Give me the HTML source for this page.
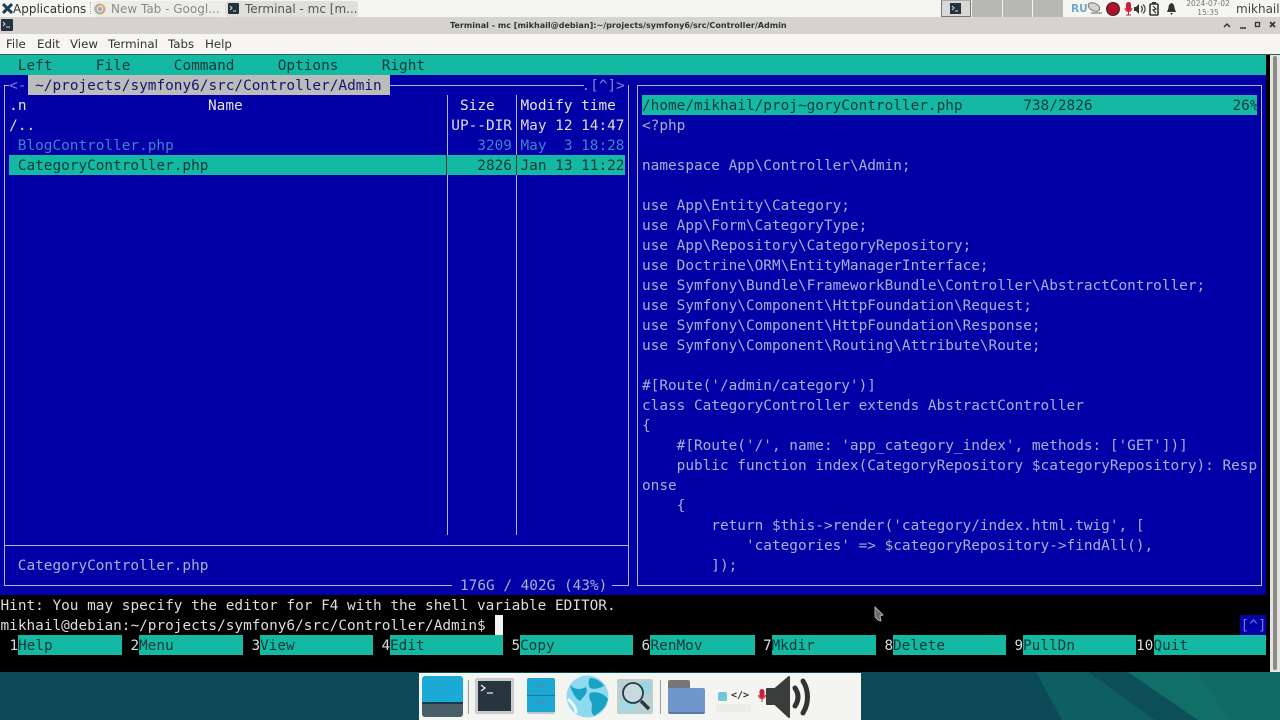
<!DOCTYPE html>
<html><head><meta charset="utf-8"><style>
html,body{margin:0;padding:0;width:1280px;height:720px;overflow:hidden;background:#0b4a58}
*{box-sizing:border-box}
.a{position:absolute}
#root{position:absolute;left:0;top:0;width:1280px;height:720px;overflow:hidden;font-family:"DejaVu Sans","Liberation Sans",sans-serif;filter:blur(.35px)}
pre{position:absolute;margin:1px 0 0 0;font:14.4px/20px "DejaVu Sans Mono","Liberation Mono",monospace;color:#c4c6dc;white-space:pre}
.w{color:#dcdcdc}.h{color:#e4e4d8}.d{color:#3f80cf}.k{color:#0f3a3a}.m{color:#0f4a48}
.l{position:absolute;background:#b4b4e0}
.t{position:absolute;background:#14b9a4}
.tb{position:absolute;font-size:12px;color:#4a4a4a;line-height:17px;white-space:pre;margin-top:0.500px}
.mn{position:absolute;font-size:11.800px;color:#333;line-height:20px;top:34px}
</style></head><body><div id="root">
<!-- top panel -->
<div class="a" style="left:0;top:0;width:1280px;height:17px;background:#f5f5f1"></div>
<svg class="a" style="left:2px;top:3px" width="11" height="11" viewBox="0 0 11 11"><path d="M1 1l9 9M10 1L1 10" stroke="#1c3f55" stroke-width="3"/></svg>
<div class="tb" style="left:13px;top:0;color:#333">Applications</div>
<div class="a" style="left:90px;top:2px;width:2px;height:12px;border-left:1px dotted #aaa"></div>
<div class="a" style="left:93px;top:1px;width:132px;height:16px;background:#ecece8;border-radius:3px"></div>
<svg class="a" style="left:94px;top:3px" width="12" height="12" viewBox="0 0 12 12"><circle cx="6" cy="6" r="5.500" fill="#d8a080"/><path d="M6 .5A5.500 5.500 0 0 1 11 4H6z" fill="#d9c070"/><path d="M1 3a5.500 5.500 0 0 0 4 8.400L7 8z" fill="#9cbf94"/><circle cx="6" cy="6" r="2.600" fill="#8fa9c8" stroke="#eee"/></svg>
<div class="tb" style="left:111px;top:0;color:#8a8a8a">New Tab - Googl...</div>
<div class="a" style="left:225px;top:1px;width:133px;height:16px;background:#dfdfdb;border-radius:3px"></div>
<div class="a" style="left:228px;top:3px;width:11px;height:11px;background:#24323e;border-radius:1px"></div>
<svg class="a" style="left:229px;top:4px" width="9" height="9" viewBox="0 0 9 9"><path d="M1 2l2 2-2 2M4 7h3" stroke="#ddd" fill="none"/></svg>
<div class="tb" style="left:245px;top:0;color:#555">Terminal - mc [m...</div>
<div class="a" style="left:941px;top:0;width:30px;height:17px;background:#d8d8d6;border:1px solid #777;border-top:1px solid #aaa"></div>
<div class="a" style="left:950px;top:3px;width:11px;height:11px;background:#24323e"></div>
<svg class="a" style="left:951px;top:4px" width="9" height="9" viewBox="0 0 9 9"><path d="M1 2l2 2-2 2M4 7h3" stroke="#ddd" fill="none"/></svg>
<div class="a" style="left:972px;top:0;width:29.500px;height:17px;background:#b7b7b3"></div>
<div class="a" style="left:1002.500px;top:0;width:29.500px;height:17px;background:#b7b7b3"></div>
<div class="a" style="left:1033px;top:0;width:30px;height:17px;background:#b7b7b3"></div>
<div class="tb" style="left:1071px;top:0;font-size:10.500px;color:#6fa8c8;font-weight:bold">RU</div>
<svg class="a" style="left:1087px;top:1px" width="16" height="15" viewBox="0 0 16 15"><ellipse cx="7" cy="6" rx="6" ry="3.800" transform="rotate(25 7 6)" fill="#d4d4d2" stroke="#777" stroke-width="1"/><path d="M4 12h11" stroke="#aaa" stroke-width="2"/></svg>
<div class="a" style="left:1106px;top:2px;width:14px;height:14px;border-radius:50%;background:#b0102a;border:1px solid #3a2a2a"></div>
<svg class="a" style="left:1124px;top:2px" width="9" height="14" viewBox="0 0 9 14"><rect x="2" y="0" width="5" height="9" rx="2.500" fill="#c8203a"/><path d="M1 6a3.500 3.500 0 0 0 7 0M4.500 10v3M2 13h5" stroke="#c8203a" fill="none"/></svg>
<svg class="a" style="left:1134px;top:3px" width="12" height="12" viewBox="0 0 12 12"><path d="M0 4h2l3-3v10L2 8H0z" fill="#333"/><path d="M7 3a4 4 0 0 1 0 6M9 1.500a6 6 0 0 1 0 9" stroke="#444" fill="none" stroke-width="1.200"/></svg>
<svg class="a" style="left:1149px;top:2px" width="11" height="14" viewBox="0 0 11 14"><rect x="1" y="2" width="8" height="11" rx="1" fill="none" stroke="#333" stroke-width="1.600"/><rect x="3" y="0" width="4" height="2" fill="#333"/><path d="M4 4l3 3-3 1 3 3" stroke="#333" fill="none" stroke-width="1.200"/></svg>
<svg class="a" style="left:1166px;top:3px" width="11" height="12" viewBox="0 0 11 12"><path d="M5.500 0C3 1 2.500 3 2.500 5L1 9h9L8.500 5C8.500 3 8 1 5.500 0zM4 10h3l-1.500 2z" fill="#333"/></svg>
<div class="a" style="left:1183px;top:0;width:50px;text-align:center;font-size:7.500px;line-height:8.500px;color:#777;white-space:pre">2024-07-02
15:35</div>
<div class="tb" style="left:1236px;top:0;color:#444">mikhail</div>
<!-- title bar -->
<div class="a" style="left:0;top:17px;width:1280px;height:17px;background:#d4d3cf"></div>
<div class="a" style="left:1px;top:19px;width:12px;height:12px;background:#24323e;border-radius:1px"></div>
<svg class="a" style="left:2px;top:20px" width="10" height="10" viewBox="0 0 10 10"><path d="M1 2l2 2-2 2M4 7h4" stroke="#ddd" fill="none"/></svg>
<div class="a" style="left:450px;top:17.500px;font-size:8.050px;line-height:16px;font-weight:bold;color:#333;white-space:pre">Terminal - mc [mikhail@debian]:~/projects/symfony6/src/Controller/Admin</div>
<svg class="a" style="left:1222px;top:20px" width="56" height="11" viewBox="0 0 56 11"><path d="M2 7l3-3 3 3" stroke="#333" fill="none" stroke-width="1.500"/><path d="M18 8h6" stroke="#333" stroke-width="1.500"/><rect x="33.500" y="2.500" width="4" height="4" stroke="#333" fill="none" stroke-width="1.300"/><path d="M48 2l5 5M53 2l-5 5" stroke="#333" stroke-width="1.600"/></svg>
<!-- menubar -->
<div class="a" style="left:0;top:34px;width:1280px;height:20px;background:#f6f5f2"></div>
<div class="mn" style="left:6px">File</div><div class="mn" style="left:37px">Edit</div><div class="mn" style="left:70px">View</div><div class="mn" style="left:108px">Terminal</div><div class="mn" style="left:168px">Tabs</div><div class="mn" style="left:205px">Help</div>
<div class="a" style="left:0;top:54px;width:1280px;height:1px;background:#2f5d5c"></div>
<!-- scrollbar -->
<div class="a" style="left:1270px;top:55px;width:10px;height:617px;background:#e4e3df"></div>
<div class="a" style="left:1273px;top:56px;width:4px;height:614px;background:#8a8a88;border-radius:2px"></div>
<!-- terminal -->
<div class="a" style="left:0;top:55px;width:1270px;height:617px;background:#000"></div>
<div class="t" style="left:0;top:55px;width:1266px;height:20px"></div>
<div class="a" style="left:0;top:75px;width:1266px;height:520px;background:#0000a6"></div>
<pre class="k" style="left:0.500px;top:55px">  Left     File     Command     Options     Right</pre>
<!-- left panel borders -->
<div class="l" style="left:4px;top:85px;width:1px;height:500px"></div>
<div class="l" style="left:628px;top:85px;width:1px;height:500px"></div>
<div class="l" style="left:4px;top:85px;width:24px;height:1px"></div>
<div class="l" style="left:390px;top:85px;width:194px;height:1px"></div>
<div class="l" style="left:4px;top:545px;width:625px;height:1px"></div>
<div class="l" style="left:4px;top:585px;width:448px;height:1px"></div>
<div class="l" style="left:612px;top:585px;width:17px;height:1px"></div>
<div class="l" style="left:447px;top:95px;width:1px;height:440px"></div>
<div class="l" style="left:516px;top:95px;width:1px;height:440px"></div>
<!-- header path -->
<div class="a" style="left:28px;top:75px;width:362px;height:20px;background:#bcbcbc"></div>
<div class="a" style="left:9px;top:80px;width:19px;height:10px;background:#0000a6"></div>
<pre style="left:9px;top:75px;color:#7f86d0">&lt;-</pre>
<pre style="left:26.500px;top:75px;color:#16166a"> ~/projects/symfony6/src/Controller/Admin </pre>
<div class="a" style="left:584px;top:80px;width:40px;height:10px;background:#0000a6"></div>
<pre style="left:581.500px;top:75px;color:#7f86d0">.[^]&gt;</pre>
<pre class="h" style="left:9.170px;top:95px">.n</pre>
<pre class="h" style="left:208px;top:95px">Name</pre>
<pre class="h" style="left:460px;top:95px">Size</pre>
<pre class="h" style="left:520.500px;top:95px">Modify time</pre>
<pre class="w" style="left:9.170px;top:115px">/..</pre>
<pre class="w" style="left:451.300px;top:115px">UP--DIR</pre>
<pre class="w" style="left:520.500px;top:115px">May 12 14:47</pre>
<pre class="d" style="left:17.800px;top:135px">BlogController.php</pre>
<pre class="d" style="left:477.300px;top:135px">3209</pre>
<pre class="d" style="left:520.500px;top:135px">May  3 18:28</pre>
<div class="t" style="left:9px;top:155px;width:616px;height:20px"></div>
<div class="a" style="left:446px;top:155px;width:1px;height:20px;background:#123c3c"></div>
<div class="a" style="left:516px;top:155px;width:1px;height:20px;background:#123c3c"></div>
<pre class="k" style="left:17.800px;top:155px">CategoryController.php</pre>
<pre class="k" style="left:477.300px;top:155px">2826</pre>
<pre class="k" style="left:520.500px;top:155px">Jan 13 11:22</pre>
<pre style="left:17.800px;top:555px;color:#a9aed8">CategoryController.php</pre>
<pre style="left:460px;top:575px;color:#a9aed8">176G / 402G (43%)</pre>
<!-- right panel -->
<div class="a" style="left:637px;top:85px;width:625px;height:501px;border:1px solid #b4b4e0"></div>
<div class="t" style="left:642px;top:95px;width:615px;height:20px"></div>
<pre class="k" style="left:642px;top:95px">/home/mikhail/proj~goryController.php       738/2826</pre>
<pre class="k" style="left:1232.500px;top:95px">26%</pre>
<pre style="left:642px;top:115px;color:#a9aed8">&lt;?php

namespace App\Controller\Admin;

use App\Entity\Category;
use App\Form\CategoryType;
use App\Repository\CategoryRepository;
use Doctrine\ORM\EntityManagerInterface;
use Symfony\Bundle\FrameworkBundle\Controller\AbstractController;
use Symfony\Component\HttpFoundation\Request;
use Symfony\Component\HttpFoundation\Response;
use Symfony\Component\Routing\Attribute\Route;

#[Route('/admin/category')]
class CategoryController extends AbstractController
{
    #[Route('/', name: 'app_category_index', methods: ['GET'])]
    public function index(CategoryRepository $categoryRepository): Resp
onse
    {
        return $this-&gt;render('category/index.html.twig', [
            'categories' =&gt; $categoryRepository-&gt;findAll(),
        ]);</pre>
<!-- shell -->
<pre class="w" style="left:0.500px;top:595px">Hint: You may specify the editor for F4 with the shell variable EDITOR.</pre>
<pre class="w" style="left:0.500px;top:615px">mikhail@debian:~/projects/symfony6/src/Controller/Admin$</pre>
<div class="a" style="left:495px;top:615px;width:8px;height:20px;background:#f4f4f4"></div>
<div class="a" style="left:1240px;top:615px;width:26px;height:20px;background:#0000a6"></div>
<pre style="left:1240.500px;top:615px;color:#6f78d8">[^]</pre>
<!-- keybar -->
<div class="t" style="left:18px;top:635px;width:104px;height:20px"></div>
<div class="t" style="left:139px;top:635px;width:104px;height:20px"></div>
<div class="t" style="left:260px;top:635px;width:113px;height:20px"></div>
<div class="t" style="left:390px;top:635px;width:113px;height:20px"></div>
<div class="t" style="left:520px;top:635px;width:113px;height:20px"></div>
<div class="t" style="left:650px;top:635px;width:105px;height:20px"></div>
<div class="t" style="left:772px;top:635px;width:104px;height:20px"></div>
<div class="t" style="left:893px;top:635px;width:113px;height:20px"></div>
<div class="t" style="left:1023px;top:635px;width:113px;height:20px"></div>
<div class="t" style="left:1154px;top:635px;width:112px;height:20px"></div>
<pre class="w" style="left:9.500px;top:635px">1</pre><pre class="k" style="left:18px;top:635px">Help</pre>
<pre class="w" style="left:130.500px;top:635px">2</pre><pre class="k" style="left:139px;top:635px">Menu</pre>
<pre class="w" style="left:251.500px;top:635px">3</pre><pre class="k" style="left:260px;top:635px">View</pre>
<pre class="w" style="left:381.500px;top:635px">4</pre><pre class="k" style="left:390px;top:635px">Edit</pre>
<pre class="w" style="left:511.500px;top:635px">5</pre><pre class="k" style="left:520px;top:635px">Copy</pre>
<pre class="w" style="left:641.500px;top:635px">6</pre><pre class="k" style="left:650.500px;top:635px">RenMov</pre>
<pre class="w" style="left:763px;top:635px">7</pre><pre class="k" style="left:771.500px;top:635px">Mkdir</pre>
<pre class="w" style="left:884.500px;top:635px">8</pre><pre class="k" style="left:893px;top:635px">Delete</pre>
<pre class="w" style="left:1014.500px;top:635px">9</pre><pre class="k" style="left:1023px;top:635px">PullDn</pre>
<pre class="w" style="left:1136px;top:635px">10</pre><pre class="k" style="left:1153.500px;top:635px">Quit</pre>
<!-- cursor -->
<svg class="a" style="left:873px;top:606px" width="12" height="17" viewBox="0 0 12 17"><path d="M2 1l8 8-3 1 1 5-3-1-3-3z" fill="#6a6a6a" stroke="#c8c8c8" stroke-width=".8"/></svg>
<!-- wallpaper -->
<svg class="a" style="left:0;top:672px" width="1280" height="48" viewBox="0 0 1280 48"><rect width="1280" height="48" fill="#0c4a58"/><path d="M1036 0L1062 48H1280V0z" fill="#0d5a60"/><path d="M1088 0L1155 48H1062L1036 0z" fill="#0e5f62"/><path d="M1088 0h40l70 48h-43z" fill="#0c4f58"/><path d="M1128 0h70l32 48h-32z" fill="#107068"/><path d="M1198 0h82v48h-50z" fill="#0f6a66"/></svg>
<!-- dock -->
<div class="a" style="left:419px;top:673px;width:442px;height:47px;background:#f4f4f1"></div>
<div class="a" style="left:422px;top:676px;width:41px;height:26px;background:#1ba9d6;border-radius:3px 3px 0 0"></div>
<div class="a" style="left:422px;top:702px;width:41px;height:15px;background:#4a5e68;border-radius:0 0 3px 3px;border-top:2px solid #143a50"></div>
<div class="a" style="left:468px;top:680px;width:1px;height:34px;background:#9a9a98"></div>
<div class="a" style="left:475px;top:678px;width:39px;height:36px;background:#c8ccce;border-radius:2px"></div>
<div class="a" style="left:478px;top:681px;width:33px;height:30px;background:#28343e"></div>
<svg class="a" style="left:480px;top:684px" width="16" height="12" viewBox="0 0 16 12"><path d="M1 1l4 3-4 3M7 9h6" stroke="#eee" fill="none" stroke-width="1.300"/></svg>
<div class="a" style="left:527px;top:678px;width:28px;height:36px;background:#1ca8d2;border-radius:2px;border-bottom:2px solid #c0c8ca"></div>
<div class="a" style="left:527px;top:695px;width:28px;height:1px;background:#137a9c"></div>
<div class="a" style="left:537px;top:686px;width:8px;height:1px;background:#5a8a9a"></div>
<div class="a" style="left:537px;top:702px;width:8px;height:1px;background:#5a8a9a"></div>
<svg class="a" style="left:566px;top:675px" width="43" height="43" viewBox="0 0 43 43"><circle cx="21.500" cy="21.500" r="21" fill="#8fdaf0"/><path d="M4 10C10 16 16 14 20 12c3 6-3 10-6 14-4-2-8-8-10-16zM24 3c6 0 12 4 14 8-4 2-10 4-14 2-2-4-2-6 0-10zM24 18c6-2 14 0 18 6-2 8-6 12-14 17-4-4-2-8-2-12-2-4-4-8-2-11z" fill="#19a2c4"/><path d="M2 24c4 4 8 8 8 14" stroke="#eef8fb" stroke-width="3" fill="none"/></svg>
<div class="a" style="left:617px;top:679px;width:36px;height:35px;background:#bcd0d2;border-radius:2px"></div>
<div class="a" style="left:639px;top:682px;width:12px;height:12px;background:#9ad6e2"></div>
<div class="a" style="left:620px;top:700px;width:16px;height:11px;background:#a4d8e4"></div>
<svg class="a" style="left:620px;top:680px" width="34" height="34" viewBox="0 0 34 34"><circle cx="13" cy="13" r="10" fill="#cfdfe2" fill-opacity=".6" stroke="#2a3a44" stroke-width="1.800"/><path d="M21 21l8 8" stroke="#2a3a44" stroke-width="3.500"/></svg>
<div class="a" style="left:660px;top:680px;width:1px;height:34px;background:#9a9a98"></div>
<div class="a" style="left:668px;top:680px;width:22px;height:28px;background:#75757a;border-radius:2px"></div>
<div class="a" style="left:668px;top:688px;width:37px;height:26px;background:#6f97cb;border-radius:2px;border-bottom:2px solid #5a7a9a"></div>
<div class="a" style="left:716px;top:704px;width:35px;height:8px;background:#ecece9;border-radius:2px"></div>
<div class="a" style="left:718px;top:692px;width:9px;height:9px;background:#6fc7d8;border-radius:2px"></div>
<div class="a" style="left:731px;top:689px;font:bold 10px/14px 'DejaVu Sans Mono',monospace;color:#333">&lt;/&gt;</div>
<svg class="a" style="left:758px;top:689px" width="8" height="14" viewBox="0 0 8 14"><rect x="1.500" y="0" width="5" height="9" rx="2.500" fill="#c8203a"/><path d="M0.500 6a3.500 3.500 0 0 0 7 0M4 10v3" stroke="#c8203a" fill="none"/></svg>
<svg class="a" style="left:765px;top:676px" width="50" height="42" viewBox="0 0 50 42"><path d="M2 13h8L24 1v40L10 28H2z" fill="#3a3c3c" stroke="#3a3c3c" stroke-linejoin="round" stroke-width="2"/><path d="M30 12c4 6 4 12 0 18" stroke="#333" stroke-width="5" fill="none" stroke-linecap="round"/><path d="M38 5c6 10 6 22 0 32" stroke="#333" stroke-width="5" fill="none" stroke-linecap="round"/></svg>
</div></body></html>
